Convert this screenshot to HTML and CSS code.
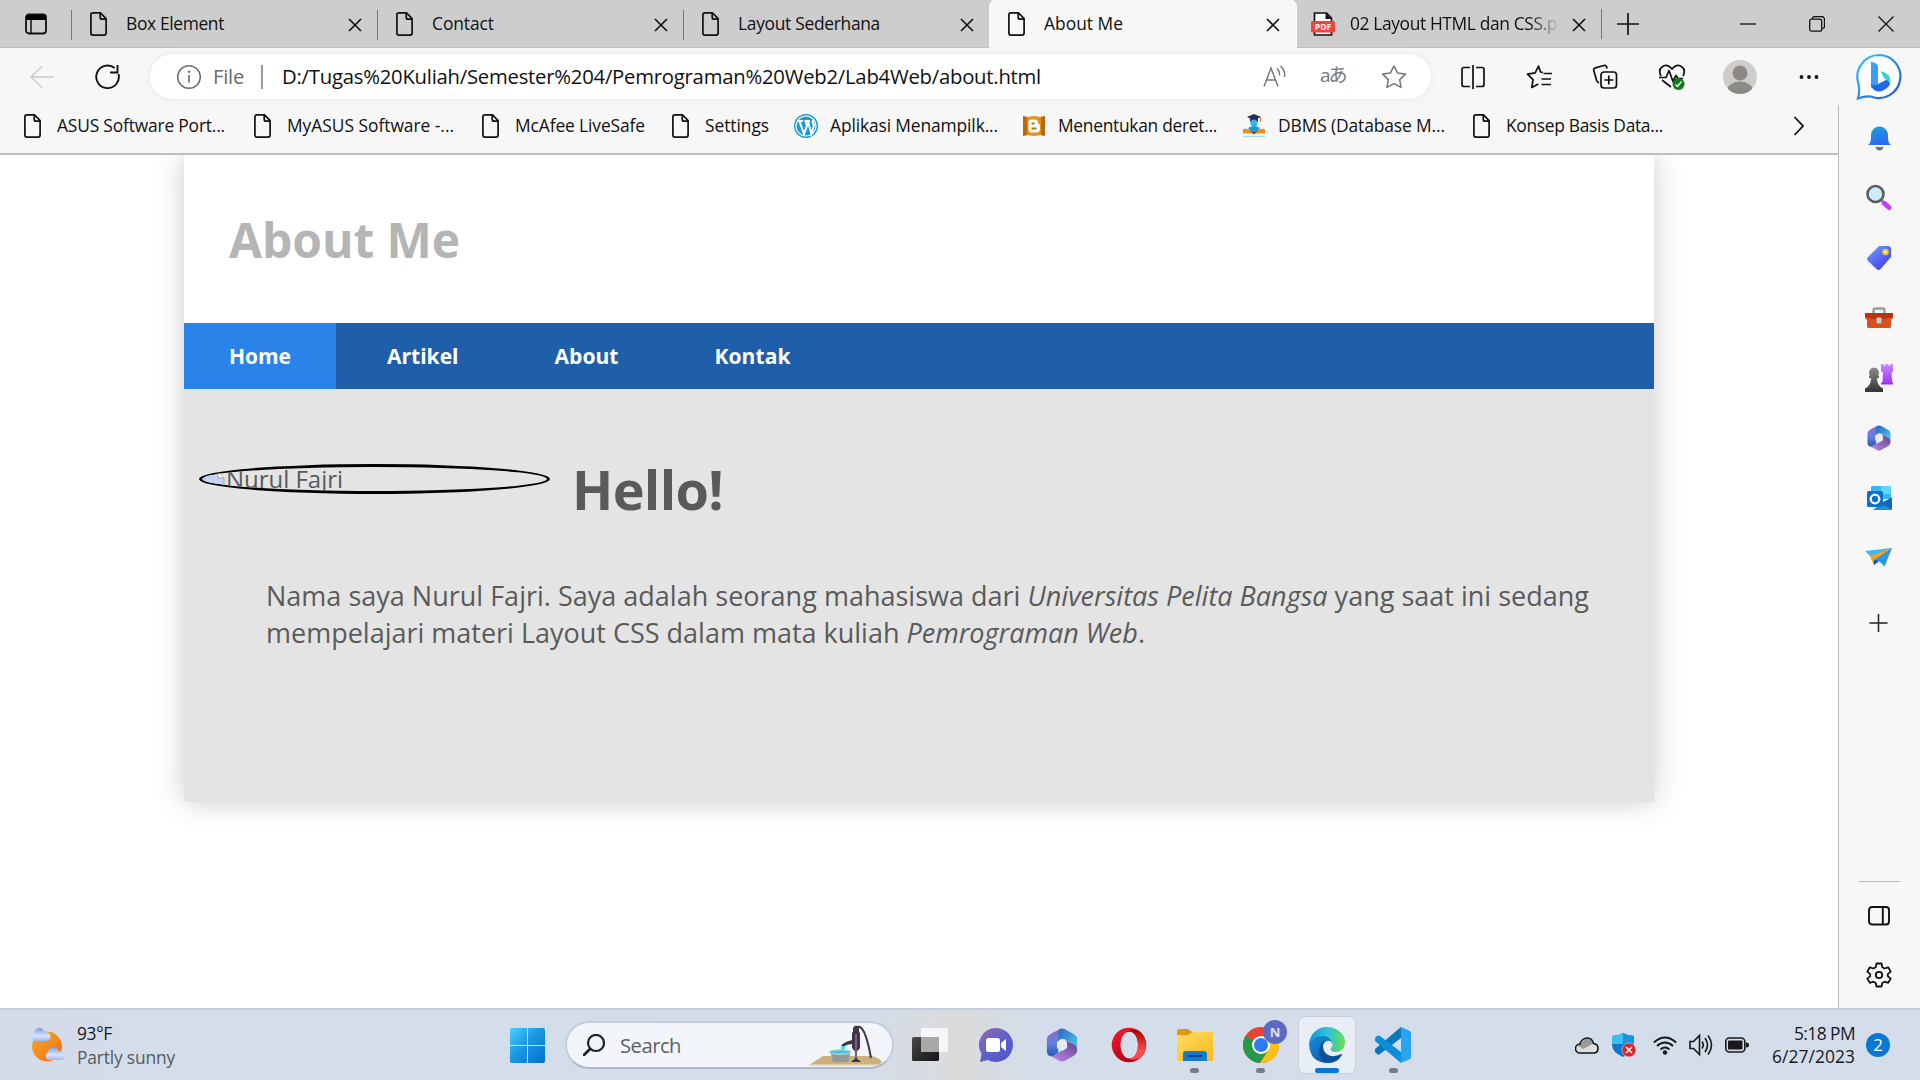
FILE: index.html
```html
<!DOCTYPE html>
<html lang="id">
<head>
<meta charset="utf-8">
<title>About Me</title>
<link rel="stylesheet" href="styles.css">
</head>
<body>
<svg class="defs" width="0" height="0">
  <defs>
    <linearGradient id="blue" x1="0" y1="0" x2="1" y2="1"><stop offset="0" stop-color="#4cd0ff"/><stop offset=".45" stop-color="#1a98e2"/><stop offset="1" stop-color="#0070d0"/></linearGradient>
    <linearGradient id="bing" x1="0" y1="0" x2="1" y2="1"><stop offset="0" stop-color="#35c8f0"/><stop offset="1" stop-color="#1b50d8"/></linearGradient>
    <linearGradient id="bell" x1="0" y1="0" x2="0.4" y2="1"><stop offset="0" stop-color="#22a0dc"/><stop offset="1" stop-color="#2a6af2"/></linearGradient>
    <linearGradient id="tag" x1="0" y1="0" x2=".8" y2="1"><stop offset="0" stop-color="#6fa8ff"/><stop offset="1" stop-color="#4338e8"/></linearGradient>
    <linearGradient id="purple" x1="0" y1="0" x2="0" y2="1"><stop offset="0" stop-color="#c78bff"/><stop offset="1" stop-color="#a52af0"/></linearGradient>
    <linearGradient id="grey" x1="0" y1="0" x2="0" y2="1"><stop offset="0" stop-color="#8d8d8d"/><stop offset="1" stop-color="#333"/></linearGradient>
    <linearGradient id="mA" x1="0" y1="0" x2="0" y2="1"><stop offset="0" stop-color="#8a66c8"/><stop offset=".5" stop-color="#6a80e4"/><stop offset="1" stop-color="#1c5cb4"/></linearGradient>
    <linearGradient id="mB" x1="0" y1="0" x2="1" y2="1"><stop offset="0" stop-color="#2a66bc"/><stop offset="1" stop-color="#48cdf5"/></linearGradient>
    <linearGradient id="mC" x1="0" y1="1" x2="1" y2="0"><stop offset="0" stop-color="#c48cf2"/><stop offset="1" stop-color="#5e4488"/></linearGradient>
    <linearGradient id="sun" x1="0" y1="0" x2="1" y2="1"><stop offset="0" stop-color="#efb02c"/><stop offset="1" stop-color="#f46a10"/></linearGradient>
    <linearGradient id="cloud" x1="0" y1="0" x2="0" y2="1"><stop offset="0" stop-color="#7c9ade"/><stop offset=".6" stop-color="#d8e4fb"/><stop offset="1" stop-color="#a0b6e6"/></linearGradient>
    <linearGradient id="chat" x1="0" y1="0" x2="1" y2="1"><stop offset="0" stop-color="#9a6bb4"/><stop offset=".5" stop-color="#5d60c8"/><stop offset="1" stop-color="#5058c4"/></linearGradient>
    <linearGradient id="opera" x1="0" y1="0" x2="0.5" y2="1"><stop offset="0" stop-color="#ff1b2d"/><stop offset="1" stop-color="#b0001a"/></linearGradient>
    <linearGradient id="operaR" x1="0" y1="0" x2="0" y2="1"><stop offset="0" stop-color="#9c0000"/><stop offset=".7" stop-color="#ff4b4b"/></linearGradient>
    <linearGradient id="folder" x1="0" y1="0" x2="1" y2="1"><stop offset="0" stop-color="#ffdc6a"/><stop offset="1" stop-color="#f8b818"/></linearGradient>
    <linearGradient id="edgeTop" x1="0" y1="0.4" x2="1" y2="0.5"><stop offset="0" stop-color="#1496d8"/><stop offset=".5" stop-color="#30c4d8"/><stop offset="1" stop-color="#68dc50"/></linearGradient>
    <linearGradient id="edgeLow" x1="0" y1="0" x2="0.6" y2="1"><stop offset="0" stop-color="#168ed8"/><stop offset="1" stop-color="#0a60b0"/></linearGradient>
    <linearGradient id="dark" x1="0" y1="0" x2="1" y2="1"><stop offset="0" stop-color="#4a4a4a"/><stop offset="1" stop-color="#141414"/></linearGradient>
    <symbol id="page" viewBox="0 0 24 24"><path d="M5.2 .9h8.3l5.6 5.7v14.500a2 2 0 0 1-2 2H5.900a2 2 0 0 1-2-2V2.900a2 2 0 0 1 2-2zM13.200 1v4.200a2 2 0 0 0 2 2h4" fill="none" stroke="currentColor" stroke-width="1.700"/></symbol>
    <symbol id="x" viewBox="0 0 14 14"><path d="M1 1l12 12M13 1L1 13" fill="none" stroke="currentColor" stroke-width="1.600"/></symbol>
    <symbol id="m365" viewBox="0 0 32 36">
      <path d="M14 1Q11 2 3 7 0 9 0 12v13q0 3 2 4 3 2 6 0l4-3V14q0-3 3-4l4-2z" fill="url(#mA)"/>
      <path d="M13 1.500Q16-.3 19 1.300l10 5.700q3 2 3 5v9q-1-3-4-4l-8-4.500q-4-2-8 1.500V5z" fill="url(#mB)"/>
      <path d="M32 18v6q0 3-3 5l-10 5.700q-3 1.600-6 0L2 28.500q3 2 6 0l9-5.500q3-2 3-5v-5l8 4q4 2 4 5z" fill="url(#mC)"/>
      <path d="M16 12.300l4.600 2.800v5.600L16 23.500l-4.600-2.800v-5.600z" fill="#e6ebf5" stroke="#e6ebf5" stroke-width="1.500" stroke-linejoin="round"/>
    </symbol>
  </defs>
</svg>

<header class="tabstrip">
  <div class="workspace"><svg width="24" height="24" viewBox="0 0 24 24"><rect x="2" y="2.500" width="20" height="19" rx="3" fill="none" stroke="#111" stroke-width="1.800"/><path d="M2 3h20v5H2z" fill="#000"/><path d="M7 8v13" stroke="#111" stroke-width="1.500"/></svg></div>
  <div class="tab"><svg class="fav"><use href="#page"/></svg><span class="label" data-w="98">Box Element</span><svg class="close"><use href="#x"/></svg></div>
  <div class="tab"><svg class="fav"><use href="#page"/></svg><span class="label" data-w="62">Contact</span><svg class="close"><use href="#x"/></svg></div>
  <div class="tab"><svg class="fav"><use href="#page"/></svg><span class="label" data-w="142">Layout Sederhana</span><svg class="close"><use href="#x"/></svg></div>
  <div class="tab active"><svg class="fav"><use href="#page"/></svg><span class="label" data-w="79">About Me</span><svg class="close"><use href="#x"/></svg></div>
  <div class="tab pdf"><svg class="fav" viewBox="0 0 24 24"><path d="M3.500 1h12l5 5v17h-17z" fill="#fff" stroke="#111" stroke-width="1.700"/><path d="M14.500 1v6h6z" fill="#111"/><rect y="9" width="24" height="11.500" rx="1.500" fill="#f93e3e"/><text x="12" y="18" text-anchor="middle" class="pdf-text">PDF</text></svg><span class="fade"><span class="label" data-w="207">02 Layout HTML dan CSS.p</span></span><svg class="close"><use href="#x"/></svg></div>
  <div class="newtab"><svg width="22" height="22" viewBox="0 0 22 22"><path d="M11 0v22M0 11h22" stroke="#111" stroke-width="1.700"/></svg></div>
  <div class="window-buttons">
    <svg width="16" height="16" viewBox="0 0 16 16"><path d="M0 8h16" stroke="#111" stroke-width="1.300"/></svg>
    <svg width="16" height="16" viewBox="0 0 16 16"><path d="M3.500 3V2.500a2 2 0 0 1 2-2h7a3 3 0 0 1 3 3v7a2 2 0 0 1-2 2" fill="none" stroke="#111" stroke-width="1.300"/><rect x=".7" y="3.200" width="12" height="12" rx="2" fill="none" stroke="#111" stroke-width="1.300"/></svg>
    <svg width="16" height="16" viewBox="0 0 16 16"><path d="M.5.5l15 15M15.500.5l-15 15" stroke="#111" stroke-width="1.300"/></svg>
  </div>
</header>

<div class="toolbar">
  <div class="nav-buttons">
    <svg width="24" height="24" viewBox="0 0 24 24"><path d="M24 12H1M12 1.500L1 12l11 10.500" fill="none" stroke="#ccc" stroke-width="1.500"/></svg>
    <svg width="26" height="26" viewBox="0 0 26 26"><path d="M23.500 10a11.300 11.300 0 1 1-3.800-5.900M22.500 1v7.500H15" fill="none" stroke="#111" stroke-width="1.900"/></svg>
  </div>
  <div class="address">
    <svg class="info" width="26" height="26" viewBox="0 0 26 26"><circle cx="13" cy="13" r="11.300" fill="none" stroke="#6d6d6d" stroke-width="1.500"/><path d="M13 11v7.500" stroke="#6d6d6d" stroke-width="1.700"/><circle cx="13" cy="7.800" r="1.200" fill="#6d6d6d"/></svg>
    <span class="scheme" data-w="31">File</span><i class="bar"></i>
    <span class="url" data-w="759">D:/Tugas%20Kuliah/Semester%204/Pemrograman%20Web2/Lab4Web/about.html</span>
    <div class="address-icons">
      <svg width="26" height="26" viewBox="0 0 26 26"><path d="M2 22.500L9 4l7 18.500M4.600 16h9M15 4.500q3 3 2.500 7M18.500 2q5 4.500 4 11" fill="none" stroke="#767676" stroke-width="1.500"/></svg>
      <span class="translate">aあ</span>
      <svg width="26" height="26" viewBox="0 0 26 26"><path d="M13 1.800l3.500 7.100 7.900 1.200-5.700 5.500 1.300 7.800-7-3.700-7 3.700 1.300-7.800L1.600 10.100l7.900-1.200z" fill="none" stroke="#767676" stroke-width="1.500" stroke-linejoin="round"/></svg>
    </div>
  </div>
  <div class="actions">
    <svg width="26" height="26" viewBox="0 0 26 26"><path d="M10 3.500H4a2 2 0 0 0-2 2v15a2 2 0 0 0 2 2h6M16 3.500h6a2 2 0 0 1 2 2v15a2 2 0 0 1-2 2h-6M13 1v24" fill="none" stroke="#111" stroke-width="1.700"/></svg>
    <svg width="26" height="26" viewBox="0 0 26 26"><path d="M17 8.500l-2.500-.5L12.500 2 9.200 8.900 1.500 10.100l5.500 5.500-1.200 7.900 6.500-3.500M17.500 9.500H26M15.500 15H25M15.500 20.500H25" fill="none" stroke="#111" stroke-width="1.700" stroke-linejoin="round"/></svg>
    <svg width="26" height="26" viewBox="0 0 26 26"><path d="M7 19q-2-1-2.500-3L1.800 6.500q-.5-2 1.500-2.600L12 1.500q2-.5 2.700 1.500l.5 1.500" fill="none" stroke="#111" stroke-width="1.700"/><rect x="9" y="8" width="15.500" height="16" rx="3" fill="none" stroke="#111" stroke-width="1.700"/><path d="M16.800 11.500v9M12.300 16h9" stroke="#111" stroke-width="1.700"/></svg>
    <svg class="heart" width="28" height="28" viewBox="0 0 28 28"><path d="M3 13Q0 7 4 4q5-4 10 2 5-6 10-2 4 3 1 9M4 17l9 7M1 14.500h7l3-7 4 11 3-6 2 3h5" fill="none" stroke="#111" stroke-width="1.700" stroke-linejoin="round"/><circle cx="20.500" cy="21" r="6" fill="#10791c"/><path d="M17.500 21.500l2 2 4-5" fill="none" stroke="#fff" stroke-width="1.300"/></svg>
    <svg class="avatar" width="34" height="34" viewBox="0 0 34 34"><clipPath id="face"><circle cx="17" cy="17" r="17"/></clipPath><circle cx="17" cy="17" r="17" fill="#cfcdca"/><g clip-path="url(#face)" fill="#8d8986"><circle cx="17" cy="13" r="7.500"/><ellipse cx="17" cy="30" rx="12.500" ry="8.500"/></g></svg>
    <svg width="20" height="6" viewBox="0 0 20 6"><g fill="#111"><circle cx="2.500" cy="3" r="1.900"/><circle cx="10" cy="3" r="1.900"/><circle cx="17.500" cy="3" r="1.900"/></g></svg>
  </div>
  <svg class="bing" width="48" height="48" viewBox="0 0 48 48"><path d="M24 2a21.500 21.500 0 1 1-8 41.500Q9 43 3 45.500 5 38 3.500 31A22 22 0 0 1 24 2z" fill="#fff" stroke="url(#bing)" stroke-width="2.200"/><path d="M16 8.500l4 1.500q3 1 3 4v17l-7 4z" fill="#3aa0f6"/><path d="M16 30q1 4 7 1l8-4q4-1 4 3 0 3-3 5l-4 2.500q-4 2-8 0-4-2-4-7.500z" fill="#1f68e8"/><path d="M25.500 18l6 2.500q5 3 3.500 9.500-3-3-6-5z" fill="#34d1d4"/></svg>
</div>

<div class="middle">
  <div class="left">
    <nav class="bookmarks">
      <a class="bm b1"><svg class="fav"><use href="#page"/></svg><span data-w="168">ASUS Software Port...</span></a>
      <a class="bm b2"><svg class="fav"><use href="#page"/></svg><span data-w="167">MyASUS Software -...</span></a>
      <a class="bm b3"><svg class="fav"><use href="#page"/></svg><span data-w="130">McAfee LiveSafe</span></a>
      <a class="bm b4"><svg class="fav"><use href="#page"/></svg><span data-w="64">Settings</span></a>
      <a class="bm b5"><svg class="fav" viewBox="0 0 24 24"><circle cx="12" cy="12" r="12" fill="#1a9ad6"/><circle cx="12" cy="12" r="10" fill="#1a9ad6" stroke="#fff" stroke-width="1.200"/><path d="M4 7h5M5.500 7.500L10 20l3-8.500L11.500 7H16M14 7.500L17.500 20 20 11q-2-2-1-5" fill="none" stroke="#fff" stroke-width="2"/></svg><span data-w="168">Aplikasi Menampilk...</span></a>
      <a class="bm b6"><svg class="fav" viewBox="0 0 24 24"><path d="M1 2l4 1 7-1 7 1 4-1v20l-4-1-7 1-7-1-4 1z" fill="#e39315"/><path d="M1 2l4 1v18l-4 1zM23 2l-4 1v18l4 1z" fill="#b8690e"/><path d="M9 5.500h4q3 0 3 4 2 0 2 2v3q0 4-4 4H9.500q-3 0-3-4V9q0-3.500 2.500-3.500z" fill="#fff"/><path d="M9.500 9.500h3M9.500 14.500h5" stroke="#b66f16" stroke-width="2"/></svg><span data-w="159">Menentukan deret...</span></a>
      <a class="bm b7"><svg class="fav" viewBox="0 0 24 24"><path d="M12 0l7 3-7 3.500L5 3z" fill="#272b58"/><path d="M8 4.500h8v3q-4 2-8 0z" fill="#272b58"/><path d="M18.500 3v5" stroke="#e08020"/><circle cx="12" cy="9" r="3.500" fill="#28b8f0"/><path d="M6 14q6-4 12 0l-6 6z" fill="#159ce0"/><path d="M1 15q7-1 11 4 4-5 11-4v4.500q-7-1-11 1-4-2-11-1z" fill="#ee8e20"/><path d="M7 15.500l5 3 5-3-5 4.500z" fill="#263b78"/><path d="M1 22.500h22" stroke="#a6dff0" stroke-width="1.400"/></svg><span data-w="167">DBMS (Database M...</span></a>
      <a class="bm b8"><svg class="fav"><use href="#page"/></svg><span data-w="157">Konsep Basis Data...</span></a>
      <svg class="more" width="12" height="20" viewBox="0 0 12 20"><path d="M1.500 1l8.500 9-8.500 9" fill="none" stroke="#111" stroke-width="1.800"/></svg>
    </nav>
    <main class="viewport">
      <article class="site">
        <header class="site-head"><h1 data-w="231">About Me</h1></header>
        <nav class="menu"><a class="on"><b data-w="62">Home</b></a><a><b data-w="71.500">Artikel</b></a><a><b data-w="64">About</b></a><a><b data-w="76">Kontak</b></a></nav>
        <section class="hero">
          <div class="intro">
            <div class="portrait"><svg width="24" height="24" viewBox="0 0 24 24"><path d="M2 2h14l6 6v14H2z" fill="#c3d4f5" stroke="#a0a0a8"/><path d="M2 22q5-14 12-7l5 7z" fill="#57a845"/><path d="M16 2v6h6" fill="#fff" stroke="#a0a0a8"/></svg><span data-w="117">Nurul Fajri</span></div>
            <h2 data-w="151">Hello!</h2>
          </div>
          <p><span data-w="1323">Nama saya Nurul Fajri. Saya adalah seorang mahasiswa dari <i>Universitas Pelita Bangsa</i> yang saat ini sedang</span><br><span data-w="879">mempelajari materi Layout CSS dalam mata kuliah <i>Pemrograman Web</i>.</span></p>
        </section>
      </article>
    </main>
  </div>
  <aside class="sidebar">
    <div class="apps">
      <svg viewBox="0 0 28 28"><path d="M3 22q3-2 3-7v-3a8.500 8.500 0 0 1 17 0v3q0 5 3 7z" fill="url(#bell)"/><path d="M10.500 24h8q-1 3.500-4 3.500t-4-3.500z" fill="#6d7078"/></svg>
      <svg viewBox="0 0 28 28"><path d="M16 17l4 4" stroke="#808080" stroke-width="2.500"/><path d="M19.500 20.500l4.500 4" stroke="#c73cf2" stroke-width="5" stroke-linecap="round"/><circle cx="10.500" cy="11" r="8" fill="#cdeafc" stroke="#5d5d5d" stroke-width="2.600"/></svg>
      <svg viewBox="0 0 28 28"><path d="M14 3h9q3 0 3 3v8L15.500 26q-2 2-4 0L3 18q-2-2 0-4z" fill="url(#tag)"/><circle cx="20.500" cy="9" r="2.300" fill="#fff" stroke="#f8c01a" stroke-width="2"/></svg>
      <svg viewBox="0 0 28 28"><path d="M8.500 9V6.500q0-2 2-2h7q2 0 2 2V9" fill="none" stroke="#999" stroke-width="2.300"/><path d="M0 9h28v5l-2 2v6.500q0 1.500-2 1.500H4q-2 0-2-1.500V16l-2-2z" fill="#d8501c"/><path d="M0 9h28v4l-9 2H9l-9-2z" fill="#b6330c"/><rect x="11.500" y="13.500" width="5" height="6" rx="1" fill="#c5c9cb"/></svg>
      <svg viewBox="0 0 28 28"><path d="M16 0h2.500v1.500h2V0h3v1.500h2V0H28v7l-1.500 2 .7 9 .8 1v1.500H16V19l1.500-1 .5-9-2-2z" fill="url(#purple)"/><path d="M9 3.500a5 5 0 0 1 4 8h1v2.500h-2q0 6 3.500 9l2.500 1.500V28H0v-3.500L2.500 23Q6 20 6 14H4v-2.500h1a5 5 0 0 1 4-8z" fill="url(#grey)"/></svg>
      <svg viewBox="0 0 28 28"><use href="#m365" x="2" y="1" width="24" height="26"/></svg>
      <svg viewBox="0 0 28 28"><path d="M7 2h18q1 0 1 1v12H6V3z" fill="#35b8f1"/><path d="M16 2h10v8H16z" fill="#62d8f8"/><path d="M8 26h17q2 0 2-2V13l-10 6z" fill="#1e8fdb"/><path d="M27 14v12L16 19z" fill="#1268b0"/><rect x="2" y="7" width="16" height="16" rx="1.500" fill="#0a71cc"/><circle cx="10" cy="15" r="4.300" fill="none" stroke="#fff" stroke-width="2.300"/></svg>
      <svg viewBox="0 0 28 28"><path d="M5 11L27 4l-7.500 18.500L14 17l-5 4z" fill="#2d94e8"/><path d="M9 16l5 1-5 4z" fill="#1454b8"/><path d="M0 7l27-3L5 12z" fill="#3db8f2"/><path d="M27 4L5 12l3.500 8.500L9 16z" fill="#f3a21c"/></svg>
      <svg viewBox="0 0 28 28"><path d="M13.500 5v18M4.500 14h18" stroke="#222" stroke-width="1.500"/></svg>
    </div>
    <div class="tools">
      <svg width="22" height="20" viewBox="0 0 22 20"><rect x="1" y="1" width="20" height="17.500" rx="3" fill="none" stroke="#111" stroke-width="1.900"/><path d="M14.800 1v17.500" stroke="#111" stroke-width="1.900"/></svg>
      <svg width="26" height="26" viewBox="0 0 26 26"><path d="M10.500 1.500h5l.8 3.700 2.300 1.300 3.600-1.200 2.500 4.300-2.900 2.500v2l2.900 2.500-2.500 4.300-3.600-1.200-2.300 1.300-.8 3.500h-5l-.8-3.500-2.300-1.300-3.600 1.200-2.500-4.300 2.900-2.500v-2L1.300 9.600l2.500-4.300 3.600 1.200 2.300-1.300z" fill="none" stroke="#111" stroke-width="1.800" stroke-linejoin="round"/><circle cx="13" cy="13" r="3.200" fill="none" stroke="#111" stroke-width="1.800"/></svg>
    </div>
  </aside>
</div>

<footer class="taskbar">
  <div class="weather">
    <svg width="36" height="36" viewBox="0 0 36 36"><circle cx="18" cy="19.500" r="15" fill="url(#sun)"/><path d="M5 14a4.500 4.500 0 0 1 0-8q1-5 5.500-5 4 0 5 4 6 0 6 5 0 4-4 4z" fill="url(#cloud)"/><path d="M19 33a4.500 4.500 0 0 1 0-8q1-5 5.500-5 4 0 5 4 6 0 6 5 0 4-4 4z" fill="url(#cloud)"/></svg>
    <div class="weather-text"><span class="strong" data-w="35">93°F</span><span data-w="98">Partly sunny</span></div>
  </div>
  <div class="dock">
    <svg class="start" width="35" height="35" viewBox="0 0 35 35"><path d="M2 0h15v17H0V2q0-2 2-2zM18 0h15q2 0 2 2v15H18zM0 18h17v17H2q-2 0-2-2zM18 18h17v15q0 2-2 2H18z" fill="url(#blue)"/></svg>
    <div class="search">
      <svg width="22" height="22" viewBox="0 0 22 22"><circle cx="13" cy="9" r="8" fill="none" stroke="#222" stroke-width="2.200"/><path d="M7 15l-6 6" stroke="#222" stroke-width="2.800" stroke-linecap="round"/></svg>
      <span data-w="61">Search</span>
      <svg class="pump" width="74" height="42" viewBox="0 0 74 42"><path d="M0 41l14-9h49q8 2 10 6l-3 3z" fill="#cdb07c"/><path d="M0 41h70" stroke="#e6d4ac" stroke-width="1.500"/><path d="M47 7q0-5 4-4 6 3 11 31" fill="none" stroke="#44354f" stroke-width="2"/><path d="M43 9l1-1V4q3-5 6 0v4l1 1v15l-3 3.500v7l4 3.500H42l4-3.500v-7L43 24v-4q-5 0-9 3h-2q0-4 11-7z" fill="#40324b"/><path d="M47 10v24" stroke="#a393a8"/><path d="M34 22v8" stroke="#43def8" stroke-width="4"/><path d="M21 27h21l-3 11H24z" fill="#90999b"/><ellipse cx="31" cy="28" rx="11" ry="2.300" fill="#48c8dd" stroke="#d1d7d9"/></svg>
    </div>
    <div class="app"><svg viewBox="0 0 36 36"><rect x="0" y="10" width="27" height="24" rx="1.500" fill="url(#dark)"/><path d="M9 1h26q1 0 1 1v22q0 1-1 1H9z" fill="#fff" opacity=".78"/><path d="M9 10h18v15H9z" fill="#a8a8a8"/></svg></div>
    <div class="app"><svg viewBox="0 0 36 36"><path d="M18 1a17 17 0 1 1-8 32l-8 2 1.500-8A17 17 0 0 1 18 1z" fill="url(#chat)"/><rect x="8" y="11" width="14" height="14" rx="2.500" fill="#fff"/><path d="M23 16l5-4v12l-5-4z" fill="#fff"/></svg></div>
    <div class="app"><svg viewBox="0 0 36 36"><use href="#m365" x="2" y="1" width="32" height="34"/></svg></div>
    <div class="app"><svg viewBox="0 0 36 36"><path fill-rule="evenodd" d="M18 .7a17.300 17.300 0 1 1 0 34.600 17.300 17.300 0 0 1 0-34.600zM18.500 4.500c-5 0-9 6-9 13.500s4 13.500 9 13.500S27 25.500 27 18 23.500 4.500 18.500 4.500z" fill="url(#opera)"/><path d="M14 6Q20 0 28 4a17.300 17.300 0 0 1 1 27q-8 4-15-1 7 4 10.500-2 2.500-4 2.500-10t-2.500-9.500Q20 2 14 6z" fill="url(#operaR)"/></svg></div>
    <div class="app open"><svg viewBox="0 0 36 36"><path d="M0 4q0-2 2-2h9l4 3h19q2 0 2 2v6H0z" fill="#dc9a0c"/><path d="M0 8h11l5-3h18q2 0 2 2v25q0 2-2 2H2q-2 0-2-2z" fill="url(#folder)"/><path d="M6 34V27q0-3 3-3h18q3 0 3 3v7z" fill="#1579cc"/><path d="M11 29h14" stroke="#0a4a98" stroke-width="2"/></svg></div>
    <div class="app open"><svg viewBox="0 0 36 36"><circle cx="18" cy="18" r="18" fill="#ea4335"/><path d="M18 18L2.400 9A18 18 0 0 0 17 36l8.800-13.500z" fill="#279847"/><path d="M18 9h15.600A18 18 0 0 1 17 36l8.800-13.500z" fill="#fbc116"/><circle cx="18" cy="18" r="9" fill="#fff"/><circle cx="18" cy="18" r="7" fill="#2c7bf0"/></svg><span class="profile">N</span></div>
    <div class="app open current"><svg viewBox="0 0 36 36"><path d="M0 17C1 6 9 0 18 0c10 0 18 7 18 15 0 6-4 10-9 10-5 0-6-2-5-4q3-3 0-7Q10 5 0 17z" fill="url(#edgeTop)"/><path d="M0 17Q5 8 15 9c5 1 8 4 8 8q-1-4-5-3-7 2-7 9 0 8 8 13Q1 36 0 17z" fill="url(#edgeLow)"/><path d="M11 20c-3 8 2 16 9 16q8 0 13-8 0-2-3 0c-8 3-15 0-16-8q0-4 3-6-5 0-6 6z" fill="#0d4f9c"/></svg></div>
    <div class="app open"><svg viewBox="0 0 36 36"><path d="M26 0v11L5 27q-2 1-3 0l-2-2v-3z" fill="#0877bd"/><path d="M0 14v-3l2-2q1-1 3 0l21 16v11z" fill="#0b8fd8"/><path d="M26 0l9 4q1 1 1 2v24q0 1-1 2l-9 4z" fill="#29a4f2"/></svg></div>
  </div>
  <div class="tray">
    <svg width="24" height="24" viewBox="0 0 24 24"><path d="M5 20A4.500 4.500 0 0 1 5 11q2-6 7.500-6 4.500 0 6 5.500 5 .5 5 5T19 20z" fill="#dedede"/><path d="M2 13q2-3 5-3 3-6 8-4l3 4.500L8 16q-4-3-6-3z" fill="#999"/><path d="M5 20A4.500 4.500 0 0 1 5 11q2-6 7.500-6 4.500 0 6 5.500 4.500.5 4.500 5T18.500 20z" fill="none" stroke="#161616" stroke-width="1.600"/></svg>
    <svg width="24" height="24" viewBox="0 0 24 24"><path d="M11 0q5 3 11 3v9q0 7-11 12Q0 19 0 12V3q6 0 11-3z" fill="#0f75cf"/><path d="M11 0q5 3 11 3v8H0V3q6 0 11-3z" fill="#39bff0"/><path d="M11 0q5 3 11 3v8H11z" fill="#1a93de"/><circle cx="17" cy="17" r="7" fill="#dc2430" stroke="#eee" stroke-width=".5"/><path d="M14 14l6 6M20 14l-6 6" stroke="#fff" stroke-width="1.500"/></svg>
    <svg width="24" height="24" viewBox="0 0 24 24"><path d="M.8 9.500q11.200-10 22.400 0M4 13q8-7 16 0M7.500 16.500q4.500-4 9 0" fill="none" stroke="#181818" stroke-width="1.800"/><circle cx="12" cy="19.500" r="2.200" fill="#181818"/></svg>
    <svg width="24" height="24" viewBox="0 0 24 24"><path d="M1 8.500h3.500l6-6v19l-6-6H1zM13 8.500q2.500 3.500 0 7M16 5q5 7 0 14M19 2.500q7 9.500 0 19" fill="none" stroke="#181818" stroke-width="1.600"/></svg>
    <svg width="24" height="24" viewBox="0 0 24 24"><rect x=".8" y="5" width="19" height="14" rx="3.500" fill="none" stroke="#181818" stroke-width="1.600"/><rect x="3" y="7.500" width="14.500" height="9" rx="1" fill="#181818"/><path d="M21 9.500q3 0 3 2.500t-3 2.500z" fill="#181818"/></svg>
    <div class="clock"><span data-w="61">5:18 PM</span><span data-w="83">6/27/2023</span></div>
    <span class="count">2</span>
  </div>
</footer>
<script src="fit.js"></script>
</body>
</html>
```
FILE: styles.css
```css
* { box-sizing: border-box; }
html, body { margin: 0; height: 100%; overflow: hidden; }
body {
  width: 1920px; height: 1080px;
  display: flex; flex-direction: column;
  font-family: "Open Sans", "Noto Sans", "Noto Sans CJK JP", sans-serif;
  color: #111; background: #fff;
}
svg { display: block; flex: none; }
.defs { position: absolute; }
[data-w] { white-space: nowrap; }
span[data-w], b[data-w] { display: inline-block; }

/* tab strip */
.tabstrip { height: 48px; flex: none; display: flex; align-items: center; background: #cdcdcd; border-bottom: 1px solid #bdbdbd; }
.workspace { width: 71px; padding-left: 24px; flex: none; }
.tab { width: 306px; height: 48px; flex: none; display: flex; align-items: center; padding: 0 15px 0 16px; font-size: 17.400px; position: relative; }
.tab::before { content: ""; position: absolute; left: 0; top: 10px; width: 1px; height: 30px; background: #777; }
.tab .fav { margin-right: 15px; }
.fav { width: 24px; height: 24px; }
.close { width: 14px; height: 14px; margin-left: auto; margin-top: 2px; }
.label { position: relative; top: -1px; }
.tab.active { width: 308px; background: #f7f7f7; border-radius: 8px 8px 0 0; padding-left: 16px; padding-right: 17px; height: 49px; }
.tab.active::before, .tab.pdf::before { display: none; }
.tab.pdf { width: 304px; padding-right: 15px; padding-left: 14px; }
.fade { width: 209px; -webkit-mask-image: linear-gradient(90deg, #000 86%, transparent 100%); mask-image: linear-gradient(90deg, #000 86%, transparent 100%); }
.pdf-text { font: bold 8.500px "Open Sans", sans-serif; fill: #fff; }
.newtab { border-left: 1px solid #777; height: 30px; padding: 4px 0 0 15px; }
.window-buttons { display: flex; gap: 53px; margin: 0 26px 0 auto; }

/* toolbar */
.toolbar { height: 57px; flex: none; display: flex; align-items: center; background: #f7f7f7; }
.nav-buttons { width: 150px; flex: none; padding-left: 30px; display: flex; align-items: center; gap: 41px; }
.address { width: 1281px; flex: none; height: 45px; border-radius: 23px; background: #fff; box-shadow: 0 0 6px #e6e6e6; display: flex; align-items: center; padding: 0 24px 0 26px; font-size: 20.300px; }
.address span[data-w] { position: relative; top: -1px; }
.scheme { margin-left: 11px; color: #6b6b6b; }
.bar { width: 2px; height: 24px; margin: 0 19px 0 17px; background: #999; }
.url { color: #111; }
.address-icons { margin-left: auto; display: flex; align-items: center; gap: 32px; }
.translate { width: 29px; font: 19px/24px "Open Sans", "Noto Sans CJK JP", sans-serif; letter-spacing: -2px; color: #767676; white-space: nowrap; padding-bottom: 4px; }
.actions { display: flex; align-items: center; padding-left: 29px; gap: 40px; }
.avatar { margin-left: -3px; }
.actions svg:last-child { margin-left: 2px; }
.bing { margin-left: 36px; }

/* bookmarks */
.middle { flex: 1; min-height: 0; display: flex; }
.left { width: 1838px; display: flex; flex-direction: column; }
.bookmarks { height: 50px; flex: none; display: flex; align-items: center; padding: 0 33px 7px 21px; background: #f7f7f7; border-bottom: 2px solid #bebebe; font-size: 17.400px; }
.bm { display: flex; align-items: center; gap: 12px; }
.bm span { position: relative; top: -1px; }
.b1 { width: 230px; }
.b2 { width: 228px; }
.b3 { width: 190px; }
.b4 { width: 125px; }
.b5 { width: 228px; }
.b6 { width: 220px; }
.b7 { width: 228px; }
.more { margin-left: auto; }

/* web page */
.viewport { flex: 1; overflow: hidden; padding-left: 184px; background: #fff; }
.site { width: 1470px; height: 647px; box-shadow: 0 0 27px #ccc; background: #fff; color: #5a5a5a; display: flex; flex-direction: column; }
.site-head { height: 168px; padding: 52px 45px 0; }
h1 { margin: 0; width: max-content; font-size: 48px; line-height: 65px; color: #b5b5b5; }
.menu { height: 66px; flex: none; display: flex; gap: 6px; background: #1f5faa; color: #fff; font-size: 21px; line-height: 66px; }
.menu a { padding: 0 45px; }
.menu .on { background: #2b83ea; }
.hero { flex: 1; padding: 60px 15px 0; background: #e4e4e4; }
.intro { display: flex; align-items: flex-start; gap: 22px; }
.portrait { width: 351px; height: 30px; margin-top: 15px; border: 3px solid #000; border-radius: 50%; overflow: hidden; display: flex; font-size: 24px; line-height: 24px; }
.portrait span { height: 24px; }
.portrait svg { margin-top: 3px; }
h2 { margin: 0; width: max-content; font-size: 54px; line-height: 80px; }
p { margin: 48px 0 0 67px; font-size: 27px; line-height: 37px; white-space: nowrap; }

/* edge sidebar */
.sidebar { width: 82px; background: #f7f7f7; border-left: 1px solid #bbb; display: flex; flex-direction: column; align-items: center; justify-content: space-between; padding-right: 2px; }
.apps { padding-top: 18px; display: flex; flex-direction: column; gap: 32.200px; }
.apps svg { width: 28px; height: 28px; }
.apps svg:last-child { margin-top: 4px; }
.tools { width: 42px; height: 127px; border-top: 1px solid #bbb; padding-top: 24px; display: flex; flex-direction: column; align-items: center; gap: 36px; }

/* taskbar */
.taskbar { height: 72px; flex: none; display: flex; align-items: center; border-top: 2px solid #c5cfdd; background: linear-gradient(90deg, #d5dce9 0, #d3deea 25%, #d5dde9 45%, #dadbdc 50%, #d4deea 54%, #d5dcea 75%, #d3deea 84%, #d5dcea 100%); }
.weather { width: 510px; flex: none; padding-left: 29px; display: flex; align-items: center; gap: 12px; }
.weather-text { display: flex; flex-direction: column; align-items: flex-start; font-size: 17.400px; line-height: 24px; color: #555b63; padding-bottom: 1px; }
.weather-text .strong { color: #15171a; }
.dock { flex: none; display: flex; align-items: center; }
.search { width: 329px; flex: none; height: 48px; margin: 0 8px 0 20px; border: 2px solid #c3cddd; border-bottom-color: #aeb9ca; border-radius: 24px; background: #f2f6fa; display: flex; align-items: center; padding: 0 9px 0 16px; font-size: 20.300px; color: #5d6065; }
.search span { margin-left: 15px; }
.pump { margin-left: auto; }
.app { width: 56px; height: 56px; margin-right: 10.200px; position: relative; display: flex; align-items: center; justify-content: center; border-radius: 6px; flex: none; }
.app svg { width: 36px; height: 36px; }
.open::after { content: ""; position: absolute; bottom: 0; width: 9px; height: 5px; border-radius: 3px; background: #777b82; }
.current { background: #e9edf5; box-shadow: 0 0 1px 1px #c7cfdb; }
.current::after { width: 24px; background: #0878d6; }
.profile { position: absolute; top: 3px; left: 30px; width: 24px; height: 24px; border-radius: 50%; background: #5c6abf; color: #dfe3fa; font: bold 13px/24px "Open Sans", sans-serif; text-align: center; }
.tray { margin-left: auto; display: flex; align-items: center; gap: 13px; padding-right: 30px; }
.tray svg:nth-child(2) { margin-right: 4px; }
.tray svg:nth-child(3) { margin-right: -1px; }
.tray svg:nth-child(4) { margin-right: -1px; }
.clock { width: 93px; display: flex; flex-direction: column; align-items: flex-end; font-size: 17.400px; line-height: 23px; color: #16181c; padding-bottom: 1px; }
.count { width: 24px; height: 24px; margin-left: -2px; border-radius: 50%; background: #0878d6; color: #fff; font-size: 17px; line-height: 24px; text-align: center; }
```
FILE: fit.js
```js
// Spread each label's letters so that it fills the width given in data-w.
document.querySelectorAll('[data-w]').forEach(function (el) {
  var natural = el.getBoundingClientRect().width;
  var gap = (parseFloat(el.dataset.w) - natural) / el.textContent.length;
  el.style.letterSpacing = gap + 'px';
});
```
